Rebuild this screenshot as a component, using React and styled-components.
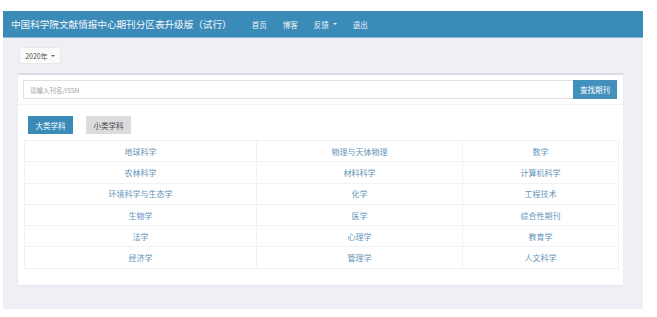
import React from "react";
import styled, { createGlobalStyle } from "styled-components";

const Global = createGlobalStyle`
  html, body { margin: 0; padding: 0; background: #ffffff; }
  body { font-family: "Noto Sans CJK SC", "Noto Sans", sans-serif; }
  * { box-sizing: border-box; }
`;

const Page = styled.div`
  padding: 11px 14px 8px 3px;
  width: 657px;
`;

const Frame = styled.div`
  width: 640px;
  height: 298px;
  background: #eef0f6;
  display: flex;
  flex-direction: column;
`;

const NavBar = styled.div`
  height: 27px;
  background: #3b8bb9;
  border-bottom: 1px solid #8ab8d3;
  display: flex;
  align-items: center;
  padding-left: 8px;
  color: #ffffff;
`;

const Brand = styled.div`
  font-size: 9.6px;
  margin-right: 20px;
  white-space: nowrap;
  opacity: 0.95;
`;

const NavLink = styled.span`
  font-size: 7.5px;
  margin-right: 16px;
  display: inline-flex;
  align-items: center;
  gap: 2px;
  opacity: 0.9;
`;

const Caret = styled.span`
  width: 0;
  height: 0;
  border-left: 2px solid transparent;
  border-right: 2px solid transparent;
  border-top: 2px solid #fff;
  margin-left: 2px;
`;

const Body = styled.div`
  padding: 9px 20px 0 15px;
  display: flex;
  flex-direction: column;
  align-items: flex-start;
`;

const YearButton = styled.div`
  margin-left: 1px;
  height: 17px;
  width: 42px;
  background: #fafafa;
  border: 1px solid #e8e9ee;
  border-radius: 2px;
  font-size: 7px;
  color: #555;
  display: flex;
  align-items: center;
  justify-content: center;
  gap: 1px;
`;

const DarkCaret = styled(Caret)`
  border-top-color: #666;
`;

const Panel = styled.div`
  margin-top: 9px;
  width: 605px;
  height: 212px;
  background: #ffffff;
  border-top: 2px solid #dcdde3;
  box-shadow: 0 1px 2px rgba(0, 0, 0, 0.05);
  padding: 5px 6px 0 5px;
  display: flex;
  flex-direction: column;
`;

const SearchRow = styled.div`
  display: flex;
  height: 19px;
`;

const SearchInput = styled.div`
  flex: 1;
  border: 1px solid #dfe0e4;
  border-right: none;
  font-size: 6.5px;
  color: #a0a0a0;
  display: flex;
  align-items: center;
  padding-left: 6px;
`;

const SearchButton = styled.div`
  width: 44px;
  background: #3b8bb9;
  color: #fff;
  font-size: 7.5px;
  display: flex;
  align-items: center;
  justify-content: center;
  opacity: 0.95;
`;

const Divider = styled.div`
  height: 1px;
  background: #f3f4f7;
  margin: 5px -6px 0 -5px;
`;

const Tabs = styled.div`
  display: flex;
  gap: 13px;
  margin: 11px 0 0 5px;
`;

const Tab = styled.div`
  width: 45px;
  height: 18px;
  background: ${(p) => (p.$active ? "#3b8bb9" : "#dcdcdf")};
  color: ${(p) => (p.$active ? "#ffffff" : "#444")};
  font-size: 7.5px;
  display: flex;
  align-items: center;
  justify-content: center;
`;

const Table = styled.table`
  margin: 6px 0 0 1px;
  width: 594px;
  border-collapse: collapse;
  table-layout: fixed;
`;

const Cell = styled.td`
  height: 21.3px;
  padding: 0;
  border: 1px solid #f1f2f5;
  text-align: center;
  font-size: 8px;
  color: #6595ba;
`;

const rows = [
  ["地球科学", "物理与天体物理", "数学"],
  ["农林科学", "材料科学", "计算机科学"],
  ["环境科学与生态学", "化学", "工程技术"],
  ["生物学", "医学", "综合性期刊"],
  ["法学", "心理学", "教育学"],
  ["经济学", "管理学", "人文科学"],
];

export default function App() {
  return (
    <>
      <Global />
      <Page>
        <Frame>
          <NavBar>
            <Brand>中国科学院文献情报中心期刊分区表升级版（试行）</Brand>
            <NavLink>首页</NavLink>
            <NavLink>博客</NavLink>
            <NavLink>
              反馈
              <Caret />
            </NavLink>
            <NavLink>退出</NavLink>
          </NavBar>
          <Body>
            <YearButton>
              2020年
              <DarkCaret />
            </YearButton>
            <Panel>
              <SearchRow>
                <SearchInput>请输入刊名/ISSN</SearchInput>
                <SearchButton>查找期刊</SearchButton>
              </SearchRow>
              <Divider />
              <Tabs>
                <Tab $active>大类学科</Tab>
                <Tab>小类学科</Tab>
              </Tabs>
              <Table>
                <colgroup>
                  <col style={{ width: "232px" }} />
                  <col style={{ width: "206px" }} />
                  <col style={{ width: "156px" }} />
                </colgroup>
                <tbody>
                  {rows.map((r, i) => (
                    <tr key={i}>
                      {r.map((c) => (
                        <Cell key={c}>{c}</Cell>
                      ))}
                    </tr>
                  ))}
                </tbody>
              </Table>
            </Panel>
          </Body>
        </Frame>
      </Page>
    </>
  );
}
